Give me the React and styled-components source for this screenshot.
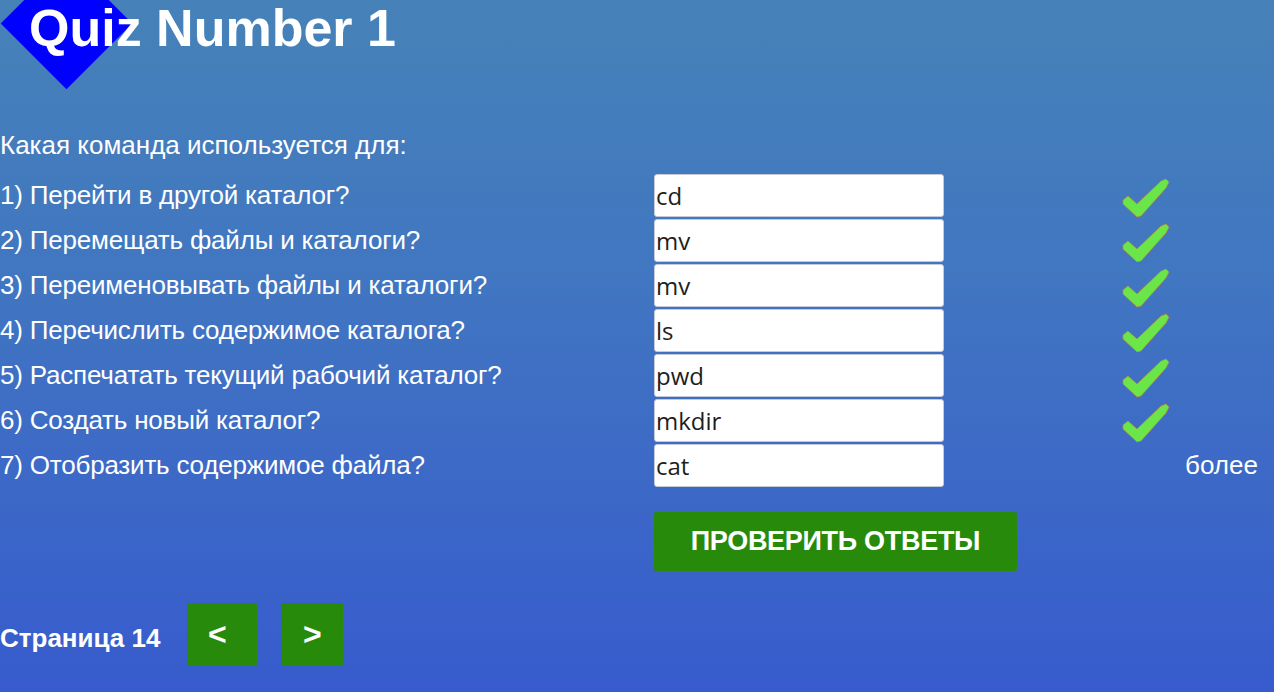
import React from 'react';
import styled, { createGlobalStyle } from 'styled-components';

const questions = [
  { label: '1) Перейти в другой каталог?', answer: 'cd', correct: true },
  { label: '2) Перемещать файлы и каталоги?', answer: 'mv', correct: true },
  { label: '3) Переименовывать файлы и каталоги?', answer: 'mv', correct: true },
  { label: '4) Перечислить содержимое каталога?', answer: 'ls', correct: true },
  { label: '5) Распечатать текущий рабочий каталог?', answer: 'pwd', correct: true },
  { label: '6) Создать новый каталог?', answer: 'mkdir', correct: true },
  { label: '7) Отобразить содержимое файла?', answer: 'cat', correct: false },
];

const CheckMark = () => (
  <CheckIcon viewBox="0 0 50 42" width="50" height="42">
    <path
      d="M3 24 L8 20 L17 28 L41 5 L46 3 L49 6 L46 12 L21 40 L17 41 L3 28 Z"
      fill="#6be649"
      stroke="#b98a3a"
      strokeWidth="0.7"
      strokeLinejoin="round"
    />
  </CheckIcon>
);

const App = () => {
  return (
    <Page>
      <GlobalStyle />
      <Header>
        <Diamond />
        <Title>Quiz Number 1</Title>
      </Header>
      <Intro>Какая команда используется для:</Intro>
      <QuestionGrid>
        {questions.map((q) => (
          <React.Fragment key={q.label}>
            <Label>{q.label}</Label>
            <AnswerInput defaultValue={q.answer} />
            <Status>{q.correct ? <CheckMark /> : <Note>более</Note>}</Status>
          </React.Fragment>
        ))}
      </QuestionGrid>
      <SubmitButton>ПРОВЕРИТЬ ОТВЕТЫ</SubmitButton>
      <Footer>
        <PageLabel>Страница 14</PageLabel>
        <NavButton $width={70} $padRight={10}>&lt;</NavButton>
        <NavButton $width={62} $padRight={0}>&gt;</NavButton>
      </Footer>
    </Page>
  );
};

export default App;

const GlobalStyle = createGlobalStyle`
  html, body {
    margin: 0;
    padding: 0;
  }
  body {
    font-family: "Liberation Sans", Arial, sans-serif;
    overflow: hidden;
  }
`;

const Page = styled.div`
  min-height: 100vh;
  box-sizing: border-box;
  background: linear-gradient(180deg, #4682b8 0%, #4176c1 40%, #375bcd 100%);
  color: #fff;
  overflow: hidden;
`;

const Header = styled.div`
  position: relative;
  height: 124px;
`;

const Diamond = styled.div`
  position: absolute;
  left: 20px;
  top: -23px;
  width: 93px;
  height: 93px;
  background: #0000ff;
  transform: rotate(45deg);
`;

const Title = styled.h1`
  position: relative;
  z-index: 1;
  margin: 0;
  padding: 0 0 0 29px;
  font-family: "Liberation Sans", Arial, sans-serif;
  font-size: 52px;
  line-height: 56px;
  font-weight: 700;
  color: #fff;
`;

const Intro = styled.div`
  font-size: 26px;
  line-height: 43px;
  margin-bottom: 7px;
`;

const QuestionGrid = styled.div`
  display: grid;
  grid-template-columns: 654px 290px 1fr;
  grid-auto-rows: 43px;
  row-gap: 2px;
  align-items: center;
`;

const Label = styled.div`
  font-size: 26px;
  letter-spacing: -0.2px;
  white-space: nowrap;
`;

const AnswerInput = styled.input`
  box-sizing: border-box;
  width: 290px;
  height: 43px;
  margin: 0;
  padding: 0 0 0 1px;
  border: 1px solid #c5cbd6;
  border-radius: 3px;
  background: #fff;
  font-family: "Open Sans", sans-serif;
  font-size: 24px;
  color: #1e1e1e;
  outline: none;
`;

const Status = styled.div`
  display: flex;
  align-items: center;
  height: 43px;
  padding-left: 176px;
`;

const CheckIcon = styled.svg`
  display: block;
  margin-top: 2px;
`;

const Note = styled.span`
  margin-left: 65px;
  font-size: 26px;
  color: #fff;
`;

const SubmitButton = styled.button`
  display: block;
  margin: 25px 0 0 654px;
  width: 363px;
  height: 59px;
  border: none;
  border-radius: 2px;
  background: #278a0b;
  color: #fff;
  font-family: "Liberation Sans", Arial, sans-serif;
  font-size: 27px;
  font-weight: 700;
  letter-spacing: -0.3px;
  cursor: pointer;
`;

const Footer = styled.div`
  display: flex;
  align-items: center;
  gap: 24px;
  margin-top: 32px;
`;

const PageLabel = styled.span`
  font-size: 26px;
  font-weight: 700;
  margin-top: 7px;
  margin-right: 3px;
`;

const NavButton = styled.button`
  width: ${(p) => p.$width}px;
  height: 63px;
  padding: 0 ${(p) => p.$padRight}px 0 0;
  border: none;
  border-radius: 2px;
  background: #278a0b;
  color: #fff;
  font-family: "Liberation Sans", Arial, sans-serif;
  font-size: 32px;
  font-weight: 700;
  cursor: pointer;
`;
